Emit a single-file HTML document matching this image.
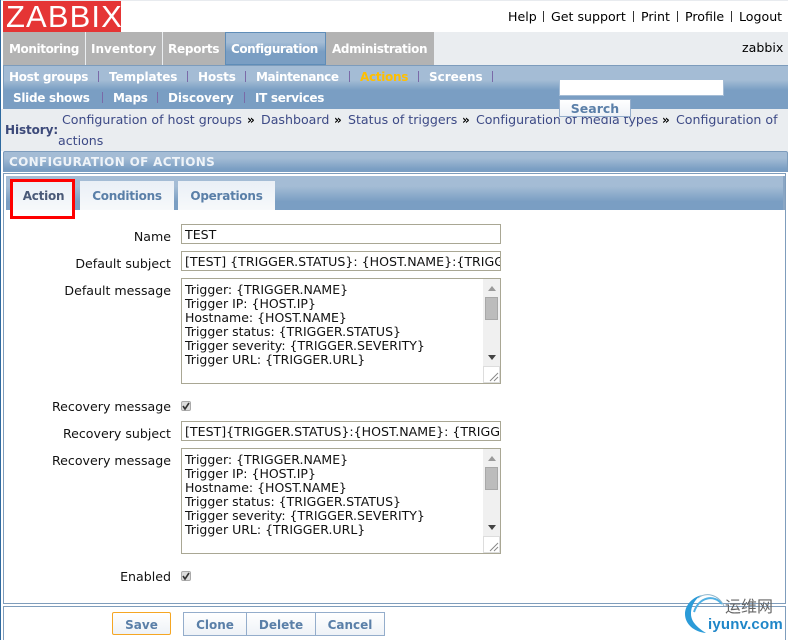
<!DOCTYPE html>
<html><head><meta charset="utf-8">
<style>
html,body{margin:0;padding:0;width:788px;height:640px;overflow:hidden;background:#fff}
body{position:relative;font-family:"DejaVu Sans","Liberation Sans",sans-serif;font-size:12.6px;color:#000}
.a{position:absolute;box-sizing:border-box}
.t{position:absolute;white-space:nowrap;line-height:14px}
.b{font-weight:bold;font-size:12px}
.m{font-weight:bold;color:#fff;font-size:12px;letter-spacing:-.4px}
.n{font-weight:bold;color:#fff;font-size:12px;letter-spacing:-.3px}
.sep{position:absolute;width:1px;height:11px;background:#7a6aa8}
.h{color:#3d4a86}
.top{color:#000}
.l{text-align:right;right:617px;color:#111}
.grad{background:linear-gradient(#a4bcd5 0,#a4bcd5 30%,#7a9ec3 60%,#7a9ec3 100%)}
.inp{background:#fff;border:1px solid #a9a794;font-family:"DejaVu Sans",sans-serif;font-size:12.6px;overflow:hidden;white-space:nowrap;padding:1px 0 0 3px;color:#111;line-height:18px}
.ta{background:#fff;border:1px solid #a9a794;overflow:hidden}
.ta pre{position:absolute;left:3px;top:4px;margin:0;font:12.5px/14px "DejaVu Sans",sans-serif;color:#111}
.btn{position:absolute;background:linear-gradient(#fff,#eef2f7);border:1px solid #94adcb;box-sizing:border-box;color:#5a7fa8;font-weight:bold;text-align:center;line-height:24px;font-size:12px}
.chk{position:absolute;width:10px;height:10px;background:#ddd;border:1px solid #aaa;border-radius:2px;box-sizing:border-box}
.tab{position:absolute;top:181px;height:29px;background:linear-gradient(#e9eff6,#f7f9fb);color:#5a7fa8;font-weight:bold;text-align:center;line-height:30px;box-sizing:border-box;font-size:12px;letter-spacing:-.25px}
</style></head><body>
<div class="a" style="left:0;top:0;width:788px;height:1px;background:#e8ebef"></div>
<div class="a" style="left:0;top:0;width:1px;height:640px;background:#2f6a9f"></div>

<div class="a" style="left:3px;top:1px;width:118px;height:31px;background:#e53535;color:#fff;font:31px/32px 'Liberation Sans',sans-serif;padding-left:3px;letter-spacing:1.1px">ZABBIX</div>
<span class="t top" style="left:508px;top:10px">Help</span><div class="sep" style="left:543px;top:11px;background:#333"></div>
<span class="t top" style="left:551px;top:10px">Get support</span><div class="sep" style="left:633px;top:11px;background:#333"></div>
<span class="t top" style="left:641px;top:10px">Print</span><div class="sep" style="left:677px;top:11px;background:#333"></div>
<span class="t top" style="left:685px;top:10px">Profile</span><div class="sep" style="left:731px;top:11px;background:#333"></div>
<span class="t top" style="left:739px;top:10px">Logout</span>

<div class="a" style="left:3px;top:32px;width:785px;height:33px;background:#eaedf0"></div>
<div class="a" style="left:3px;top:32px;width:82px;height:33px;background:#b3b3b3"></div>
<div class="a" style="left:86px;top:32px;width:76px;height:33px;background:#b3b3b3"></div>
<div class="a" style="left:163px;top:32px;width:62px;height:33px;background:#b3b3b3"></div>
<div class="a grad" style="left:225px;top:32px;width:101px;height:33px;border:1px solid #5f8db8"></div>
<div class="a" style="left:326px;top:32px;width:108px;height:33px;background:#b3b3b3"></div>
<span class="t m" style="left:9px;top:42px">Monitoring</span>
<span class="t m" style="left:91px;top:42px;letter-spacing:0">Inventory</span>
<span class="t m" style="left:168px;top:42px;letter-spacing:-.25px">Reports</span>
<span class="t m" style="left:231px;top:42px;letter-spacing:-.45px">Configuration</span>
<span class="t m" style="left:332px;top:42px">Administration</span>
<span class="t top" style="left:742px;top:41px">zabbix</span>

<div class="a" style="left:3px;top:65px;width:785px;height:44px;background:linear-gradient(#a4bcd5 0,#a4bcd5 14px,#7a9ec3 24px,#7a9ec3 100%);border-top:1px solid #7d9cbc;border-left:1px solid #7d9cbc"></div>
<span class="t n" style="left:9px;top:70px">Host groups</span><div class="sep" style="left:98px;top:71px"></div>
<span class="t n" style="left:109px;top:70px;letter-spacing:-.08px">Templates</span><div class="sep" style="left:187px;top:71px"></div>
<span class="t n" style="left:198px;top:70px;letter-spacing:-.1px">Hosts</span><div class="sep" style="left:245px;top:71px"></div>
<span class="t n" style="left:256px;top:70px;letter-spacing:-.4px">Maintenance</span><div class="sep" style="left:349px;top:71px"></div>
<span class="t n" style="left:360px;top:70px;color:#ffbf00">Actions</span><div class="sep" style="left:418px;top:71px"></div>
<span class="t n" style="left:429px;top:70px;letter-spacing:0">Screens</span><div class="sep" style="left:492px;top:71px"></div>
<span class="t n" style="left:13px;top:91px">Slide shows</span><div class="sep" style="left:102px;top:92px"></div>
<span class="t n" style="left:113px;top:91px">Maps</span><div class="sep" style="left:157px;top:92px"></div>
<span class="t n" style="left:168px;top:91px;letter-spacing:-.08px">Discovery</span><div class="sep" style="left:244px;top:92px"></div>
<span class="t n" style="left:255px;top:91px">IT services</span>
<div class="a" style="left:559px;top:79px;width:165px;height:17px;background:#fff;border:1px solid #a4bcd5"></div>

<div class="a" style="left:1px;top:109px;width:787px;height:42px;background:#eaedf0"></div>
<span class="t b" style="left:5px;top:123px;color:#3d4a7a;letter-spacing:-.1px">History:</span>
<span class="t h" style="left:62px;top:113px">Configuration of host groups</span><span class="t b" style="left:247px;top:113px;letter-spacing:-1px">»</span>
<span class="t h" style="left:261px;top:113px">Dashboard</span><span class="t b" style="left:334px;top:113px">»</span>
<span class="t h" style="left:348px;top:113px">Status of triggers</span><span class="t b" style="left:462px;top:113px">»</span>
<span class="t h" style="left:476px;top:113px;letter-spacing:-.05px">Configuration of media types</span><span class="t b" style="left:662px;top:113px">»</span>
<span class="t h" style="left:676px;top:113px">Configuration of</span>
<span class="t h" style="left:58px;top:134px">actions</span>
<div class="btn" style="left:559px;top:99px;width:72px;height:18px;line-height:18px;font-size:12.5px">Search</div>

<div class="a" style="left:3px;top:151px;width:785px;height:21px;background:linear-gradient(#a4bcd5 0,#a4bcd5 30%,#7a9ec3 85%);border:1px solid #7d9cbc;border-bottom:0;border-radius:2px 2px 0 0"></div>
<span class="t b" style="left:9px;top:155px;color:#eef3f8;letter-spacing:.33px">CONFIGURATION OF ACTIONS</span>

<div class="a" style="left:3px;top:173px;width:783px;height:431px;background:#fff;border:1px solid #7f9dbc"></div>
<div class="a" style="left:6px;top:176px;width:779px;height:34px;background:linear-gradient(#a4bcd5 0,#a4bcd5 30%,#7a9ec3 75%);border-right:2px solid #8aa6c4"></div>
<div class="tab" style="left:13px;width:61px;color:#4a5a78">Action</div>
<div class="tab" style="left:80px;width:94px">Conditions</div>
<div class="tab" style="left:178px;width:97px">Operations</div>
<div class="a" style="left:10px;top:179px;width:65px;height:40px;border:3px solid #f00"></div>

<span class="t l" style="top:230px">Name</span>
<div class="a inp" style="left:181px;top:224px;width:320px;height:20px">TEST</div>
<span class="t l" style="top:257px">Default subject</span>
<div class="a inp" style="left:181px;top:251px;width:320px;height:20px">[TEST] {TRIGGER.STATUS}: {HOST.NAME}:{TRIGGER.NAME}</div>
<span class="t l" style="top:284px">Default message</span>
<div class="a ta" style="left:181px;top:278px;width:320px;height:106px"><pre>Trigger: {TRIGGER.NAME}
Trigger IP: {HOST.IP}
Hostname: {HOST.NAME}
Trigger status: {TRIGGER.STATUS}
Trigger severity: {TRIGGER.SEVERITY}
Trigger URL: {TRIGGER.URL}</pre>
<div class="a" style="right:0;top:0;width:17px;height:104px;background:#f0f0f0"></div>
<div class="a" style="right:2px;top:18px;width:13px;height:23px;background:#bcbcbc;border:1px solid #a8a8a8"></div>
<div class="a" style="right:4px;top:7px;width:0;height:0;border:4px solid transparent;border-bottom:5px solid #9a9a9a;border-top:0"></div>
<div class="a" style="right:4px;top:76px;width:0;height:0;border:4px solid transparent;border-top:5px solid #444;border-bottom:0"></div>
<div class="a" style="right:0;bottom:0;width:17px;height:17px;background:#fff;border:1px solid #ddd"></div>
<svg class="a" style="right:1px;bottom:1px" width="11" height="11"><path d="M2 10L10 2M6 10L10 6" stroke="#888" fill="none"/></svg>
</div>

<span class="t l" style="top:400px">Recovery message</span>
<div class="chk" style="left:181px;top:401px"></div><svg class="a" style="left:181px;top:401px" width="10" height="10"><path d="M2 5L4 8L8 2" stroke="#333" stroke-width="1.6" fill="none"/></svg>
<span class="t l" style="top:427px">Recovery subject</span>
<div class="a inp" style="left:181px;top:421px;width:320px;height:20px">[TEST]{TRIGGER.STATUS}:{HOST.NAME}: {TRIGGER.NAME}</div>
<span class="t l" style="top:454px">Recovery message</span>
<div class="a ta" style="left:181px;top:448px;width:320px;height:106px"><pre>Trigger: {TRIGGER.NAME}
Trigger IP: {HOST.IP}
Hostname: {HOST.NAME}
Trigger status: {TRIGGER.STATUS}
Trigger severity: {TRIGGER.SEVERITY}
Trigger URL: {TRIGGER.URL}</pre>
<div class="a" style="right:0;top:0;width:17px;height:104px;background:#f0f0f0"></div>
<div class="a" style="right:2px;top:18px;width:13px;height:23px;background:#bcbcbc;border:1px solid #a8a8a8"></div>
<div class="a" style="right:4px;top:7px;width:0;height:0;border:4px solid transparent;border-bottom:5px solid #9a9a9a;border-top:0"></div>
<div class="a" style="right:4px;top:76px;width:0;height:0;border:4px solid transparent;border-top:5px solid #444;border-bottom:0"></div>
<div class="a" style="right:0;bottom:0;width:17px;height:17px;background:#fff;border:1px solid #ddd"></div>
<svg class="a" style="right:1px;bottom:1px" width="11" height="11"><path d="M2 10L10 2M6 10L10 6" stroke="#888" fill="none"/></svg>
</div>
<span class="t l" style="top:570px">Enabled</span>
<div class="chk" style="left:181px;top:571px"></div><svg class="a" style="left:181px;top:571px" width="10" height="10"><path d="M2 5L4 8L8 2" stroke="#333" stroke-width="1.6" fill="none"/></svg>

<div class="a" style="left:3px;top:606px;width:783px;height:40px;border:1px solid #7f9dbc;background:#fff"></div>
<div class="btn" style="left:112px;top:612px;width:59px;height:23px;border-color:#f5a623;border-radius:2px">Save</div>
<div class="btn" style="left:183px;top:612px;width:64px;height:24px">Clone</div>
<div class="btn" style="left:246px;top:612px;width:70px;height:24px">Delete</div>
<div class="btn" style="left:315px;top:612px;width:70px;height:24px">Cancel</div>

<svg class="a" style="left:684px;top:592px" width="62" height="46"><path d="M18 3C6 6 1 15 1 22C1 32 10 40 22 41C14 36 7 30 7 22C7 13 12 6 18 3Z" fill="#2b9bd8"/><path d="M38 12C30 2 15 5 10 20" stroke="#4fb0e4" stroke-width="2" fill="none"/><path d="M40 14C34 2 22 0 14 6" stroke="#8fb6cc" stroke-width="1" fill="none"/></svg>
<span class="t" style="left:725px;top:597px;color:#666;font:16px/17px 'Noto Sans CJK SC',sans-serif">运维网</span>
<span class="t" style="left:708px;top:617px;color:#1f86c8;font:bold 15px/16px 'Liberation Sans',sans-serif;letter-spacing:.2px">iyunv.com</span>
</body></html>
